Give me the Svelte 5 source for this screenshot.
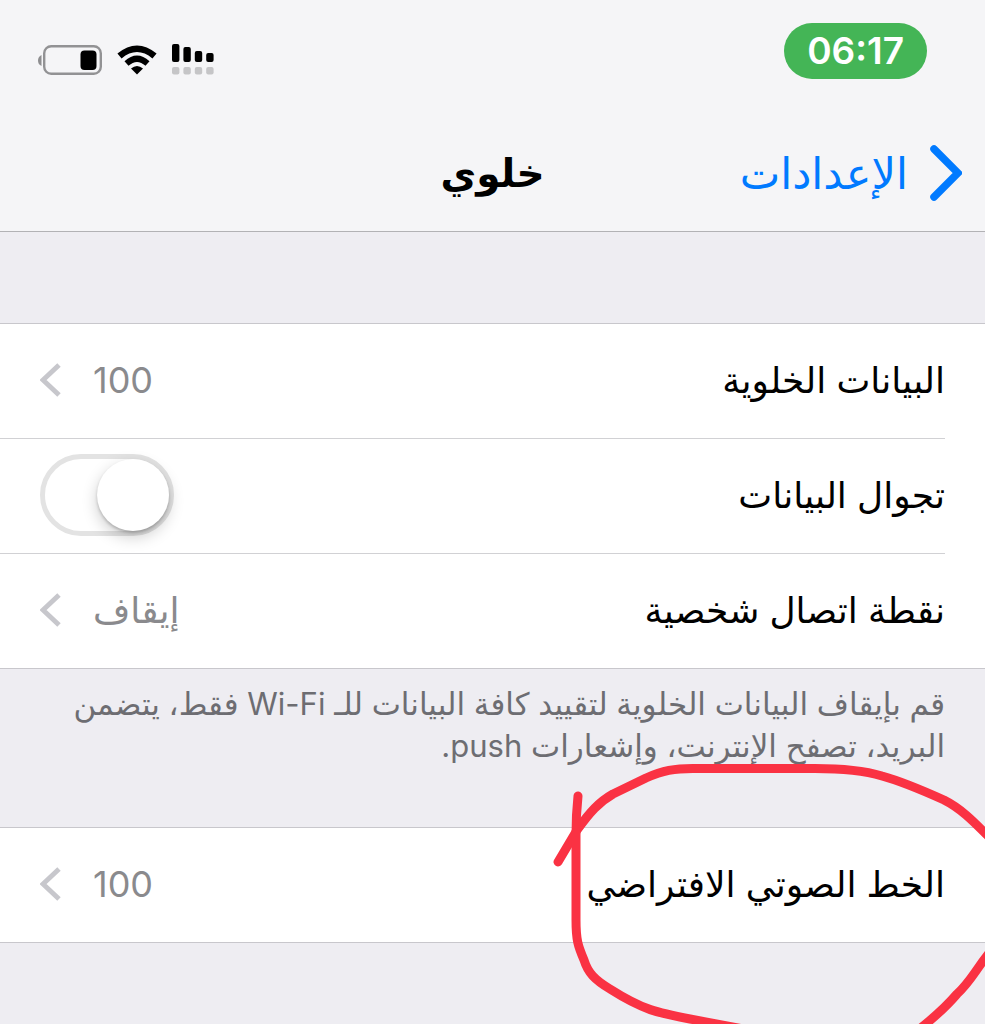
<script lang="ts">
	interface Row {
		id: string;
		label: string;
		value?: string;
		toggle?: boolean;
	}

	const dataRows: Row[] = [
		{ id: 'cellular-data', label: 'البيانات الخلوية', value: '100' },
		{ id: 'roaming', label: 'تجوال البيانات', toggle: true },
		{ id: 'hotspot', label: 'نقطة اتصال شخصية', value: 'إيقاف' }
	];

	const voiceRows: Row[] = [
		{ id: 'voice-line', label: 'الخط الصوتي الافتراضي', value: '100' }
	];

	const bars = [18, 15, 11, 9];

	let roaming = $state(false);
</script>

{#snippet group(rows: Row[])}
	<ul class="group">
		{#each rows as row (row.id)}
			<li>
				{#if row.toggle}
					<div class="row">
						<label for={row.id}>{row.label}</label>
						<input class="switch" id={row.id} type="checkbox" role="switch" bind:checked={roaming} />
					</div>
				{:else}
					<button class="row" type="button">
						<span>{row.label}</span>
						<span class="detail">
							<span class="value">{row.value}</span>
							<svg class="chevron" viewBox="0 0 21 34" aria-hidden="true">
								<path d="M19 2 3 17l16 15" fill="none" stroke="#c7c7cc" stroke-width="5" />
							</svg>
						</span>
					</button>
				{/if}
			</li>
		{/each}
	</ul>
{/snippet}

<div class="screen" dir="rtl" lang="ar">
	<header>
		<div class="status">
			<time class="clock">06:17</time>
			<div class="icons">
				<!-- dual SIM signal -->
				<svg width="43" height="32" viewBox="0 0 43 32" aria-hidden="true">
					{#each bars as h, i}
						<rect x={i * 11.4} y={18 - h} width="7.400" height={h} rx="2" fill="#000" />
						<rect x={i * 11.4} y="23" width="7.400" height="7.400" rx="2" fill="#c5c5c7" />
					{/each}
				</svg>
				<!-- wifi -->
				<svg width="40" height="30" viewBox="0 0 40 30" aria-hidden="true">
					<path d="M2.500 11Q20-3.500 37.500 11" fill="none" stroke="#000" stroke-width="6.500" />
					<path d="M9.500 18.500Q20 9 30.500 18.500" fill="none" stroke="#000" stroke-width="6" />
					<path d="M14 23.500Q20 18.500 26 23.500L20 29.500Z" fill="#000" />
				</svg>
				<!-- battery -->
				<svg width="64" height="30" viewBox="0 0 64 30" aria-hidden="true">
					<path d="M3.500 10v11Q0 19.500 0 15.500T3.500 10Z" fill="#8e8e90" />
					<rect x="6.200" y="1.200" width="56.600" height="27.600" rx="7" fill="none" stroke="#929294" stroke-width="2.400" />
					<rect x="42.500" y="5.500" width="16" height="19.500" rx="4" fill="#000" />
				</svg>
			</div>
		</div>
		<nav>
			<a class="back" href="#settings">
				<svg width="32" height="56" viewBox="0 0 32 56" aria-hidden="true">
					<path d="M4 4l24 24L4 52" fill="none" stroke="#007aff" stroke-width="7.500" stroke-linecap="round" />
				</svg>
				<span>الإعدادات</span>
			</a>
			<h1>خلوي</h1>
		</nav>
	</header>

	<main>
		{@render group(dataRows)}
		<p class="note">
			قم بإيقاف البيانات الخلوية لتقييد كافة البيانات للـ Wi-Fi فقط، يتضمن البريد، تصفح الإنترنت، وإشعارات push.
		</p>
		<section class="marked">
			{@render group(voiceRows)}
			<svg class="scribble" width="445" height="284" viewBox="0 0 445 284" aria-hidden="true">
				<path d="M18 122 37 90C50 72 59 62 73 54L106 38C122 31 134 28 157 28.500H275C300 28.500 322 30 342 36C364 42 384 51 404 60C422 69 435 83 451 99" />
				<path d="M38 56C36 75 36 80 36 95V180C36 200 38 206 44 220C48 233 55 240 70 249C103 270 118 273 150 279L230 294" />
				<path d="M450 212C434 232 431 241 417 254C406 267 397 275 382 287" />
			</svg>
		</section>
	</main>
</div>

<style>
	:global(body) {
		margin: 0;
		background: #eeedf2;
	}

	.screen {
		min-height: 100vh;
		overflow: hidden;
		background: #eeedf2;
		color: #000;
		font-family: Inter, 'DejaVu Sans', sans-serif;
		font-size: 36px;
	}

	/* Header */
	header {
		background: #f5f5f7;
		border-bottom: 1px solid #b2b2b5;
	}

	.status {
		display: flex;
		align-items: center;
		justify-content: space-between;
		padding: 23px 58px 0 38px;
	}

	.clock {
		padding: 0 23px;
		border-radius: 28px;
		background: #44b556;
		color: #fff;
		font-size: 37px;
		font-weight: 600;
		line-height: 56px;
	}

	.icons {
		display: flex;
		align-items: center;
		gap: 15px;
		padding-top: 18px;
	}

	nav {
		display: grid;
		grid-template-columns: 1fr auto 1fr;
		align-items: center;
		height: 116px;
		margin-top: 36px;
		padding: 0 23px;
		box-sizing: border-box;
	}

	.back {
		display: flex;
		align-items: center;
		gap: 22px;
		color: #007aff;
		font-size: 43px;
		line-height: 56px;
		text-decoration: none;
	}

	h1 {
		margin: 0;
		font-size: 39px;
		font-weight: 600;
		line-height: 56px;
	}

	/* Lists */
	main {
		padding-top: 91px;
	}

	.group {
		margin: 0;
		padding: 0;
		list-style: none;
		background: #fff;
		border-top: 1px solid #c8c7cc;
		border-bottom: 1px solid #c8c7cc;
	}

	li {
		padding-right: 40px;
	}

	li + li .row {
		border-top: 1px solid #d1d1d4;
	}

	.row {
		display: flex;
		align-items: center;
		justify-content: space-between;
		box-sizing: content-box;
		width: 100%;
		height: 112px;
		padding: 0 0 2px;
		border: 0;
		background: none;
		color: inherit;
		font: inherit;
		text-align: right;
	}

	li {
		display: flex;
		padding-left: 40px;
		background: #fff;
	}

	/* separators run to the left edge of the screen */
	li + li .row {
		margin-left: -40px;
		padding-left: 40px;
	}

	.detail {
		display: flex;
		align-items: center;
		gap: 32px;
		color: #8a8a8d;
	}

	.chevron {
		width: 21px;
		height: 34px;
	}

	.switch {
		appearance: none;
		box-sizing: border-box;
		width: 134px;
		height: 82px;
		margin: 0;
		padding: 0;
		border: 5px solid #e3e3e3;
		border-radius: 41px;
		background: #fff;
	}

	.switch::before {
		content: '';
		display: block;
		width: 72px;
		height: 72px;
		border-radius: 50%;
		background: #fff;
		box-shadow: 0 6px 16px rgba(0, 0, 0, 0.2), 0 2px 3px rgba(0, 0, 0, 0.2);
	}

	.switch:checked {
		border-color: #4cd964;
		background: #4cd964;
	}

	.switch:checked::before {
		margin-right: 52px;
	}

	.note {
		margin: 0;
		padding: 14px 40px 60px;
		color: #6d6d72;
		font-size: 31px;
		line-height: 42px;
	}

	/* Hand-drawn ring around the voice line row */
	.marked {
		position: relative;
	}

	.scribble {
		position: absolute;
		top: -87px;
		right: 0;
		overflow: visible;
		pointer-events: none;
		fill: none;
		stroke: #fa3243;
		stroke-width: 9;
		stroke-linecap: round;
		stroke-linejoin: round;
	}
</style>
